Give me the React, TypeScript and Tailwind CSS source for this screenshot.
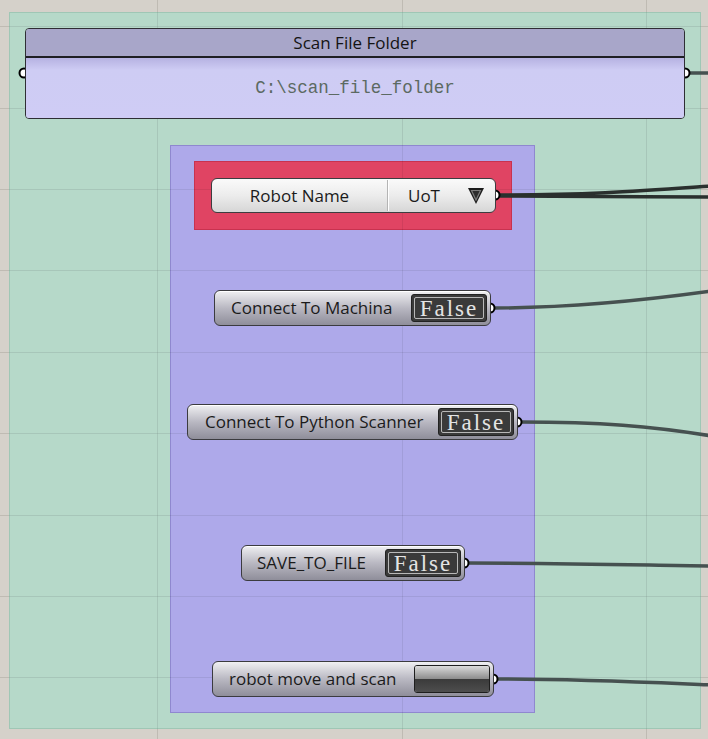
import React from 'react';

const font = { fontFamily: '"Open Sans", "Noto Sans", sans-serif' };
const mono = { fontFamily: '"Liberation Mono", "Courier New", monospace' };
const courier = { fontFamily: '"Liberation Serif", "Courier New", serif' };

const FalseBox: React.FC = () => (
  <div className="h-full w-[76px] shrink-0 rounded-[3px] border border-[#222] bg-[#3a3a3a] p-[2px]">
    <div
      className="flex h-full items-center justify-center rounded-[2px] border border-[#b8b8b8] pt-[1px] text-[23px] leading-none tracking-[2px] text-[#e4e4e4]"
      style={courier}
    >
      False
    </div>
  </div>
);

const Toggle: React.FC<{ label: string; left: string; top: string; width: string; pad: string }> = ({
  label,
  left,
  top,
  width,
  pad,
}) => (
  <div
    className={`absolute ${left} ${top} ${width} flex h-[36px] items-center rounded-[6px] border border-[#3b3b3f] bg-linear-to-b from-[#f0f0f2] via-[#b9b8c2] to-[#8f8e9a] py-[3px] pr-[3px] shadow-[inset_0_1px_0_#ffffff]`}
  >
    <div className={`flex-1 ${pad} text-[17px] text-[#1b1b1b]`} style={font}>
      {label}
    </div>
    <FalseBox />
  </div>
);

const App: React.FC = () => {
  const hLines = [26, 108, 189, 270, 352, 433, 515, 596, 677];
  const vLines = [157, 402, 646];
  return (
    <div className="relative h-[739px] w-[708px] overflow-hidden bg-[#d5d1ca]">
      {/* canvas grid */}
      <svg className="absolute inset-0" width="708" height="739">
        {hLines.map((y) => (
          <line key={`h${y}`} x1="0" x2="708" y1={y + 0.5} y2={y + 0.5} stroke="#bfbbb3" strokeWidth="1" />
        ))}
        {vLines.map((x) => (
          <line key={`v${x}`} x1={x + 0.5} x2={x + 0.5} y1="0" y2="739" stroke="#bfbbb3" strokeWidth="1" />
        ))}
      </svg>

      {/* green group */}
      <div className="absolute left-[9px] top-[12px] h-[717px] w-[692px] border border-[#9fc7b5] bg-[#b3d9c9]/90" />
      {/* purple group */}
      <div className="absolute left-[170px] top-[145px] h-[568px] w-[365px] border border-[#8f88cf] bg-[#aea7ec]/95" />
      {/* red group */}
      <div className="absolute left-[194px] top-[161px] h-[69px] w-[318px] border border-[#c8324f] bg-[#e04463]" />

      {/* grid showing through groups */}
      <svg className="pointer-events-none absolute inset-0" width="708" height="739">
        {hLines.map((y) => (
          <line key={`h${y}`} x1="9" x2="701" y1={y + 0.5} y2={y + 0.5} stroke="#000" strokeOpacity="0.07" />
        ))}
        {vLines.map((x) => (
          <line key={`v${x}`} x1={x + 0.5} x2={x + 0.5} y1="12" y2="729" stroke="#000" strokeOpacity="0.07" />
        ))}
      </svg>

      {/* wires and ports */}
      <svg className="absolute inset-0" width="708" height="739" fill="none">
        <g stroke="#465150" strokeWidth="3.5" strokeLinecap="round">
          <path d="M686 73 L712 73" />
          <path d="M497 195 C 590 195, 640 191, 712 186" stroke="#2a302e" />
          <path d="M497 196 C 590 196, 640 197, 712 197" stroke="#2a302e" />
          <path d="M493 308 C 570 308, 640 301, 712 291" />
          <path d="M520 422 C 600 422, 650 426, 712 436" />
          <path d="M467 563 C 560 563, 640 565, 712 566" />
          <path d="M497 679 C 580 679, 640 682, 712 685" />
        </g>
        <g fill="#fff" stroke="#000" strokeWidth="2">
          <circle cx="24" cy="73" r="4.5" />
          <circle cx="685" cy="73" r="4.5" />
          <circle cx="495" cy="195" r="4.5" />
          <circle cx="490" cy="308" r="4.5" />
          <circle cx="517" cy="422" r="4.5" />
          <circle cx="464" cy="563" r="4.5" />
          <circle cx="493" cy="679" r="4.5" />
        </g>
      </svg>

      {/* Scan File Folder panel */}
      <div className="absolute left-[25px] top-[28px] flex h-[91px] w-[660px] flex-col overflow-hidden rounded-[4px] border border-[#2e2e34]">
        <div
          className="flex h-[29px] shrink-0 items-center justify-center border-b-2 border-[#1f1f24] bg-[#a8a6c9] text-[17px] text-[#141414]"
          style={font}
        >
          Scan File Folder
        </div>
        <div className="flex flex-1 items-center justify-center bg-linear-to-b from-[#b6b2e2] via-[#ceccf4] via-20% to-[#cfccf5]">
          <span className="text-[17.5px] text-[#5c6a62]" style={mono}>
            C:\scan_file_folder
          </span>
        </div>
      </div>

      {/* Robot Name value list */}
      <div className="absolute left-[211px] top-[178px] flex h-[35px] w-[285px] items-center rounded-[6px] border border-[#3d3d40] bg-linear-to-b from-[#fafafa] via-[#ececec] to-[#d6d6d6]">
        <div className="flex w-[175px] items-center justify-center text-[17px] text-[#1b1b1b]" style={font}>
          Robot Name
        </div>
        <div className="h-[31px] w-px bg-[#b4b4b4] shadow-[1px_0_0_#ffffff]" />
        <div className="flex flex-1 items-center justify-between pl-[20px] pr-[10px]">
          <span className="text-[17px] text-[#1b1b1b]" style={font}>
            UoT
          </span>
          <svg width="18" height="18" viewBox="0 0 18 18">
            <polygon points="1,1 17,1 9,17" fill="#1c1c1c" />
            <polygon points="4.5,3.5 13.5,3.5 9,13" fill="#2c2c2c" stroke="#7a7a7a" strokeWidth="1.2" />
          </svg>
        </div>
      </div>

      <Toggle label="Connect To Machina" left="left-[214px]" top="top-[290px]" width="w-[277px]" pad="pl-[16px]" />
      <Toggle label="Connect To Python Scanner" left="left-[187px]" top="top-[404px]" width="w-[331px]" pad="pl-[17px]" />
      <Toggle label="SAVE_TO_FILE" left="left-[241px]" top="top-[545px]" width="w-[224px]" pad="pl-[15px]" />

      {/* button */}
      <div className="absolute left-[212px] top-[661px] flex h-[36px] w-[282px] items-center rounded-[6px] border border-[#3b3b3f] bg-linear-to-b from-[#f0f0f2] via-[#b9b8c2] to-[#8f8e9a] py-[3px] pr-[3px]">
        <div className="flex-1 pl-[16px] text-[17px] text-[#1b1b1b]" style={font}>
          robot move and scan
        </div>
        <div className="flex h-full w-[76px] flex-col overflow-hidden rounded-[3px] border border-[#1e1e1e]">
          <div className="h-1/2 bg-linear-to-b from-[#dcdcdc] to-[#8c8c8c]" />
          <div className="h-1/2 bg-linear-to-b from-[#3a3a3a] to-[#4e4e4e]" />
        </div>
      </div>
    </div>
  );
};

export default App;
